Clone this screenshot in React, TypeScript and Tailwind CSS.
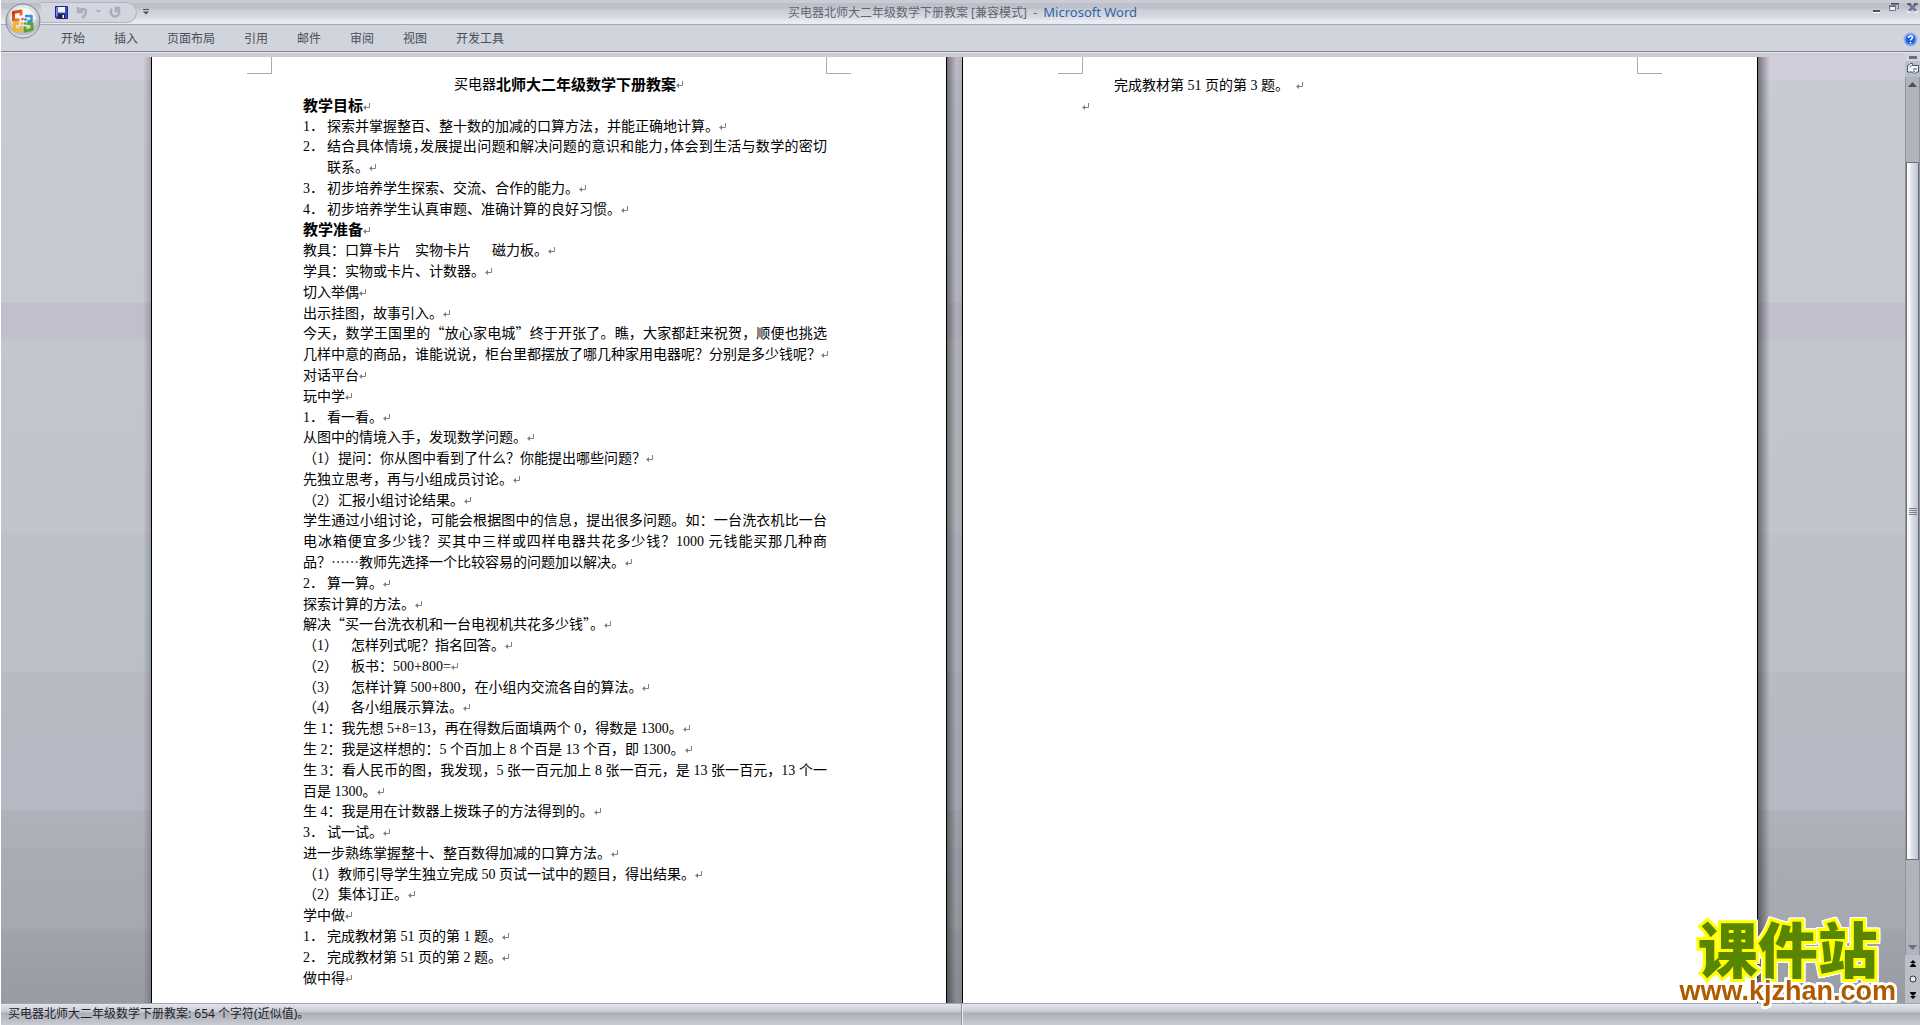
import React from 'react';

interface DocLine {
  label?: string;
  labelWidth?: 'num' | 'paren';
  text: string;
  heading?: boolean;
  justify?: boolean;
  indent?: boolean;
  tight?: boolean;
  noMark?: boolean;
}

const TABS = ['开始', '插入', '页面布局', '引用', '邮件', '审阅', '视图', '开发工具'];

const LINES: DocLine[] = [
  { text: '教学目标', heading: true },
  { label: '1．', text: '探索并掌握整百、整十数的加减的口算方法，并能正确地计算。' },
  {
    label: '2．',
    text: '结合具体情境，发展提出问题和解决问题的意识和能力，体会到生活与数学的密切',
    justify: true,
    tight: true,
    noMark: true,
  },
  { text: '联系。', indent: true },
  { label: '3．', text: '初步培养学生探索、交流、合作的能力。' },
  { label: '4．', text: '初步培养学生认真审题、准确计算的良好习惯。' },
  { text: '教学准备', heading: true },
  { text: '教具：口算卡片　实物卡片　\u00a0\u00a0磁力板。' },
  { text: '学具：实物或卡片、计数器。' },
  { text: '切入举偶' },
  { text: '出示挂图，故事引入。' },
  { text: '今天，数学王国里的“放心家电城”终于开张了。瞧，大家都赶来祝贺，顺便也挑选', justify: true, noMark: true },
  { text: '几样中意的商品，谁能说说，柜台里都摆放了哪几种家用电器呢？分别是多少钱呢？' },
  { text: '对话平台' },
  { text: '玩中学' },
  { label: '1．', text: '看一看。' },
  { text: '从图中的情境入手，发现数学问题。' },
  { text: '（1）提问：你从图中看到了什么？你能提出哪些问题？' },
  { text: '先独立思考，再与小组成员讨论。' },
  { text: '（2）汇报小组讨论结果。' },
  { text: '学生通过小组讨论，可能会根据图中的信息，提出很多问题。如：一台洗衣机比一台', justify: true, noMark: true },
  { text: '电冰箱便宜多少钱？买其中三样或四样电器共花多少钱？1000 元钱能买那几种商', justify: true, noMark: true },
  { text: '品？……教师先选择一个比较容易的问题加以解决。' },
  { label: '2．', text: '算一算。' },
  { text: '探索计算的方法。' },
  { text: '解决“买一台洗衣机和一台电视机共花多少钱”。' },
  { label: '（1）', labelWidth: 'paren', text: '怎样列式呢？指名回答。' },
  { label: '（2）', labelWidth: 'paren', text: '板书：500+800=' },
  { label: '（3）', labelWidth: 'paren', text: '怎样计算 500+800，在小组内交流各自的算法。' },
  { label: '（4）', labelWidth: 'paren', text: '各小组展示算法。' },
  { text: '生 1：我先想 5+8=13，再在得数后面填两个 0，得数是 1300。' },
  { text: '生 2：我是这样想的：5 个百加上 8 个百是 13 个百，即 1300。' },
  { text: '生 3：看人民币的图，我发现，5 张一百元加上 8 张一百元，是 13 张一百元，13 个一', justify: true, noMark: true },
  { text: '百是 1300。' },
  { text: '生 4：我是用在计数器上拨珠子的方法得到的。' },
  { label: '3．', text: '试一试。' },
  { text: '进一步熟练掌握整十、整百数得加减的口算方法。' },
  { text: '（1）教师引导学生独立完成 50 页试一试中的题目，得出结果。' },
  { text: '（2）集体订正。' },
  { text: '学中做' },
  { label: '1．', text: '完成教材第 51 页的第 1 题。' },
  { label: '2．', text: '完成教材第 51 页的第 2 题。' },
  { text: '做中得' },
];

const Mark = () => (
  <svg className="inline-block align-baseline" width="8" height="9" viewBox="0 0 8 9" aria-hidden="true">
    <path d="M6.5 1v4.5H1.5" fill="none" stroke="#808080" strokeWidth="1" />
    <path d="M0 5.5 3 3v5z" fill="#808080" />
  </svg>
);

// Quotes and the ellipsis take their full-width shape from the CJK face
const Mixed: React.FC<{ text: string }> = ({ text }) => (
  <>
    {text.split(/(“|”。?|…+)/).map((part, i) =>
      /^[“”…]/.test(part) ? (
        <span key={i} className="font-['Noto_Sans_CJK_SC',sans-serif] leading-none">{part}</span>
      ) : (
        part
      )
    )}
  </>
);

const Line: React.FC<{ line: DocLine }> = ({ line }) => (
  <p className={`flex h-5 leading-5 whitespace-nowrap ${line.heading ? 'text-[15px] font-bold' : 'text-sm'} ${line.indent ? 'pl-6' : ''}`}>
    {line.label && (
      <span className={line.labelWidth === 'paren' ? 'w-12 shrink-0' : 'w-6 shrink-0'}>{line.label}</span>
    )}
    <span
      className={`${line.justify ? 'flex-1 [text-align-last:justify]' : ''} ${line.tight ? "[font-feature-settings:'halt']" : ''}`}
    >
      <Mixed text={line.text} />
      {!line.noMark && <Mark />}
    </span>
  </p>
);

const Page: React.FC<{ children: React.ReactNode }> = ({ children }) => (
  <section className="flex w-[796px] min-w-0 flex-col border-x border-black bg-white px-[119px] pb-3.5 font-['Liberation_Serif','Noto_Sans_CJK_SC',serif] text-black">
    <div className="-mx-6 flex justify-between">
      <div className="h-[17px] w-[25px] border-r border-b border-[#a9a9b4]" />
      <div className="h-[17px] w-[25px] border-b border-l border-[#a9a9b4]" />
    </div>
    {children}
  </section>
);

const OfficeButton = () => (
  <button type="button" aria-label="Office" className="absolute top-[3px] left-1 z-10 h-9 w-9">
    <svg width="36" height="36" viewBox="0 0 36 36">
      <defs>
        <radialGradient id="orb" cx="50%" cy="35%" r="65%">
          <stop offset="0" stopColor="#ffffff" />
          <stop offset="0.55" stopColor="#dcdde3" />
          <stop offset="0.8" stopColor="#b4b6c0" />
          <stop offset="1" stopColor="#f2f3f6" />
        </radialGradient>
        <linearGradient id="red" x1="0" y1="0" x2="1" y2="1">
          <stop offset="0" stopColor="#c8320c" />
          <stop offset="1" stopColor="#f48a2a" />
        </linearGradient>
      </defs>
      <circle cx="18" cy="18" r="17" fill="url(#orb)" stroke="#7d808a" strokeWidth="1" />
      <path d="M5 17a13 12 0 0 1 26 0c-8-3-18-3-26 0z" fill="#fff" opacity=".6" />
      <g fill="none" strokeWidth="3" strokeLinejoin="round">
        <path d="M14.5 17H8.500V9.500l7.500-1.500v4.500" stroke="url(#red)" />
        <path d="M20 13h6.500v5H22.500" stroke="#3f8fd6" strokeWidth="2.400" />
        <path d="M14 20.500H9.500v6.500h6.500v-4" stroke="#f6b51e" />
        <path d="M21.500 20.500H27v6L20 28v-4.500" stroke="#5ba32b" />
      </g>
      <circle cx="17.500" cy="16" r="1.300" fill="#e4571b" />
      <circle cx="17" cy="20.500" r="1.300" fill="#f6b51e" />
      <circle cx="20" cy="20.500" r="1.300" fill="#5ba32b" />
      <circle cx="20.500" cy="16.500" r="1.300" fill="#2f76c4" />
    </svg>
  </button>
);

const QuickAccess = () => (
  <div className="flex flex-1 items-center">
    <div className="ml-10 flex h-[21px] w-24 items-center rounded-r-full border border-l-0 border-[#b2b5c1] bg-[#d3d6df] pl-3.5">
      <button type="button" aria-label="保存">
        <svg width="13" height="13" viewBox="0 0 13 13">
          <path d="M.5.5h12v12h-11l-1-1z" fill="#3b49c8" stroke="#20277c" />
          <path d="M3 1h7v5.500H3z" fill="#f3f5ff" />
          <path d="M3 8h7v4.500H3z" fill="#1c2242" />
          <path d="M7.500 9H9v3H7.500z" fill="#fff" />
          <path d="M1 1h1.500v9H1z" fill="#7d8bf0" />
        </svg>
      </button>
      <button type="button" aria-label="撤消" className="ml-2">
        <svg width="12" height="13" viewBox="0 0 12 13" fill="none" stroke="#a9adba" strokeWidth="2.500">
          <path d="M2 1v5h5M2.500 5.500C5 2 10 2 10 6c0 3-2 4-4 6" />
        </svg>
      </button>
      <button type="button" aria-label="撤消列表" className="ml-2">
        <svg width="5" height="4" viewBox="0 0 5 4"><path d="M0 0h5L2.500 3z" fill="#a9adba" /></svg>
      </button>
      <button type="button" aria-label="恢复" className="ml-2">
        <svg width="12" height="13" viewBox="0 0 12 13" fill="none" stroke="#a9adba" strokeWidth="2.500">
          <path d="M3 3a4.300 4.300 0 1 0 6 0M7 6.500V2h4.500" />
        </svg>
      </button>
    </div>
    <button type="button" aria-label="自定义快速访问工具栏" className="ml-1.5">
      <svg width="6" height="6" viewBox="0 0 6 6" fill="#4b4f5b"><path d="M0 0h6v1H0zM0 2.500h6L3 5.500z" /></svg>
    </button>
  </div>
);

const WindowButtons = () => (
  <div className="flex flex-1 items-start justify-end gap-2 self-start pt-[3px] pr-0.5">
    <button type="button" aria-label="最小化">
      <svg width="9" height="10" viewBox="0 0 9 10"><path d="M1 7h7v2H1z" fill="#4d515c" /><path d="M1 9h7v1H1z" fill="#fff" /></svg>
    </button>
    <button type="button" aria-label="向下还原">
      <svg width="10" height="9" viewBox="0 0 10 9" fill="none" stroke="#6b7894">
        <path d="M2.500 2V1.500h7v4H8" /><path d="M.5 3.500h6v4h-6z" fill="#eef0f5" /><path d="M2 .5h8M0 3h7" stroke="#4d515c" />
      </svg>
    </button>
    <button type="button" aria-label="关闭">
      <svg width="11" height="10" viewBox="0 0 11 10"><path d="M2 1l7 7M9 1L2 8" stroke="#6b7894" strokeWidth="2.500" /><path d="M0 1h4M7 1h4" stroke="#4d515c" strokeWidth="1.500" /><path d="M0 9h4M7 9h4" stroke="#fff" /></svg>
    </button>
  </div>
);

const ScrollBar = () => (
  <aside className="flex w-[15px] shrink-0 flex-col bg-[#bbbfca]">
    <div className="flex h-2 items-center justify-center bg-[#d2d4de]">
      <span className="h-[3px] w-2 bg-[#6b6f79]" />
    </div>
    <button type="button" aria-label="标尺" className="flex h-4 items-center justify-center">
      <svg width="12" height="12" viewBox="0 0 12 12" fill="#f4f6fb" stroke="#3e5570">
        <path d="M.5 2.500l2-1 1-1h2v2h6v6.500H9.500l-2 2-2-2h-5z" /><path d="M2.500 4l2-1.500M7 5v2M9 5v2M6 7.500l2 1.500" />
      </svg>
    </button>
    <div className="flex flex-1 flex-col items-stretch border-x border-[#8f939e] bg-[#b0b3bc]">
      <button type="button" aria-label="向上滚动" className="flex h-3.5 items-center justify-center">
        <svg width="9" height="5" viewBox="0 0 9 5"><path d="M0 5h9L4.500 0z" fill="#4b4f5b" /></svg>
      </button>
      <div className="grow-72" />
      <div className="flex grow-[696] flex-col items-center justify-center gap-px border border-[#6c707a] bg-linear-to-r from-[#fbf9ee] from-25% via-[#e3e6f0] via-35% to-[#bfc5d1]">
        <span className="h-px w-2 bg-[#7b7f8a]" />
        <span className="h-px w-2 bg-[#7b7f8a]" />
        <span className="h-px w-2 bg-[#7b7f8a]" />
        <span className="h-px w-2 bg-[#7b7f8a]" />
      </div>
      <div className="grow-[82]" />
      <button type="button" aria-label="向下滚动" className="flex h-3.5 items-center justify-center">
        <svg width="9" height="5" viewBox="0 0 9 5"><path d="M0 0h9L4.500 5z" fill="#6b6f79" /></svg>
      </button>
    </div>
    <div className="flex flex-col items-center">
      <button type="button" aria-label="前一页" className="flex h-4 items-center">
        <svg width="6" height="7" viewBox="0 0 6 7" fill="#000"><path d="M0 3h6L3 0zM0 6h6L3 3zM0 6h6v1H0z" /></svg>
      </button>
      <button type="button" aria-label="选择浏览对象" className="flex h-4 items-center">
        <svg width="8" height="8" viewBox="0 0 8 8"><circle cx="4" cy="4" r="3" fill="#e9e9e4" stroke="#33363d" /></svg>
      </button>
      <button type="button" aria-label="下一页" className="flex h-4 items-center">
        <svg width="6" height="7" viewBox="0 0 6 7" fill="#000"><path d="M0 0h6v1H0zM0 1h6L3 4zM0 4h6L3 7z" /></svg>
      </button>
    </div>
  </aside>
);

export default function App() {
  return (
    <div
      lang="zh-CN"
      className="relative flex min-h-screen flex-col overflow-hidden border-l border-white bg-[#cfcbd6] font-['Noto_Sans','Noto_Sans_CJK_SC',sans-serif]"
    >
      <OfficeButton />

      <header>
        <div className="flex h-[25px] items-center border-b border-[#a5a8b4] bg-[linear-gradient(#c9ccd6_0,#c9ccd6_3px,#bcbfc8_3px,#bfc2cb_8px,#cbced7_10px,#d3d6de_15px,#e0e2e8_19px,#e9ebf2_21px)]">
          <QuickAccess />
          <h1 className="pt-0.5 pl-1.5 text-xs whitespace-pre text-[#62656f]">
            买电器北师大二年级数学下册教案 [兼容模式]  -  <span className="text-[13px] leading-none text-[#2f65a5]">Microsoft Word</span>
          </h1>
          <WindowButtons />
        </div>
        <nav className="flex h-[27px] items-center gap-[29px] border-b border-[#7d838c] bg-[#d0d4dd] pt-0.5 pr-0.5 pl-[60px] text-xs text-[#4a4d57]">
          {TABS.map((tab) => (
            <button key={tab} type="button">{tab}</button>
          ))}
          <button type="button" aria-label="帮助" className="ml-auto">
            <svg width="15" height="15" viewBox="0 0 15 15">
              <circle cx="7.500" cy="7.500" r="6.500" fill="#1f5fdc" stroke="#8fb3e0" />
              <circle cx="7.500" cy="7.500" r="5.500" fill="none" stroke="#cfe0fb" strokeWidth=".8" />
              <path d="M5.500 6c0-3 4-2.500 4-.5 0 1.500-2 1.500-2 3M7.500 10v1.500" fill="none" stroke="#fff" strokeWidth="1.500" />
            </svg>
          </button>
        </nav>
      </header>

      <div className="flex flex-1 border-t border-[#e3e5ec]">
        <main className="mt-1 flex flex-1 justify-center bg-[linear-gradient(#d1cedb_2.400%,#c8cbd4_2.400%,#c6c8d2_26%,#c1bfcd_26%,#c1bfcd_29.800%,#c4c6ce_29.800%,#c2c4cd_50.400%,#bdc1ca_50.400%,#bbbfc8_65%,#b8bbc4_65%,#b6b9c3_79.600%,#afb2bb_79.600%,#acafb7_83.600%,#a9acb5_83.600%,#a6a9b1_92.200%,#a1a4ac_92.200%,#999ba4_100%)] pl-[3px]">
          <div className="flex flex-1 justify-end">
            <div className="w-2 bg-linear-to-r from-transparent to-black/20" />
          </div>

          <Page>
            <article className="flex flex-1 flex-col justify-between pt-px pl-8">
              <h2 className="flex h-5 justify-center pl-2 text-sm leading-5 whitespace-nowrap">
                买电器<strong className="text-[15px]">北师大二年级数学下册教案</strong>
                <span><Mark /></span>
              </h2>
              {LINES.map((line, i) => (
                <Line key={i} line={line} />
              ))}
            </article>
          </Page>

          <div className="w-[15px] bg-linear-to-r from-black/45 via-black/10 via-60% to-black/15" />

          <Page>
            <article className="flex flex-col pt-px text-sm leading-[21px]">
              <p className="h-[21px] pl-8 whitespace-pre">完成教材第 51 页的第 3 题。  <Mark /></p>
              <p className="h-[21px]"><Mark /></p>
            </article>
          </Page>

          <div className="flex flex-1">
            <div className="w-3 bg-linear-to-r from-black/45 to-transparent" />
          </div>
        </main>
        <ScrollBar />
      </div>

      <footer className="flex h-[22px] items-stretch border-t border-[#a2a5af] bg-[linear-gradient(#e3e5ed_0,#ced1da_6px,#c3c6cf_8px,#abaeb7_9px,#b8bbc4_14px,#c8cbd4_21px)] text-xs text-[#1f2229]">
        <p className="w-1/2 pl-[7px] leading-5">买电器北师大二年级数学下册教案: 654 个字符(近似值)。</p>
        <div className="w-1/2 border-l border-[#8f929c] shadow-[inset_1px_0_#eef0f5]" />
      </footer>

      <div className="absolute right-6 bottom-5 flex flex-col items-center [filter:drop-shadow(1px_0_#fff)_drop-shadow(-1px_0_#fff)_drop-shadow(0_1px_#fff)_drop-shadow(0_-1px_#fff)]">
        <span className="font-['Noto_Sans_CJK_SC',sans-serif] text-[60px] leading-[60px] font-black text-[#5a8500] [-webkit-text-stroke:6px_#ffff00] [paint-order:stroke_fill]">
          课件站
        </span>
        <a
          href="#kjzhan"
          className="font-['Liberation_Sans',sans-serif] text-[27px] leading-7 font-bold text-[#b05a00] [-webkit-text-stroke:3px_#ffffff] [paint-order:stroke_fill]"
        >
          www.kjzhan.com
        </a>
      </div>
    </div>
  );
}
